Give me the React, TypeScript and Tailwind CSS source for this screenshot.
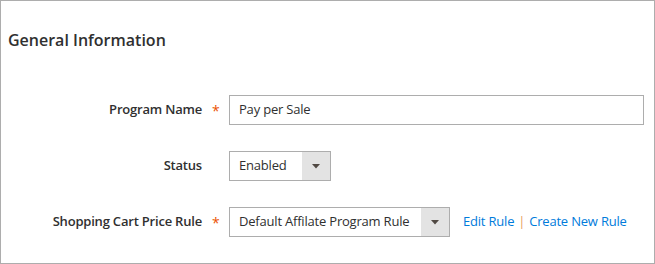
const font = { fontFamily: '"Open Sans", "Liberation Sans", sans-serif' };

function Arrow() {
  return (
    <svg width="8" height="5" viewBox="0 0 8 5" className="block">
      <path d="M0 0 H8 L4 4.5 Z" fill="#514943" />
    </svg>
  );
}

function Row({
  label,
  required,
  children,
}: {
  label: string;
  required?: boolean;
  children: React.ReactNode;
}) {
  return (
    <div className="flex h-[30px] items-center">
      <div className="w-[201px] text-right text-[13px] font-semibold tracking-[-0.2px] text-[#303030]">
        {label}
      </div>
      <div className="w-[27px] pl-[10px] text-[14px] text-[#eb5202]">
        {required ? "*" : ""}
      </div>
      {children}
    </div>
  );
}

function Select({ value, width }: { value: string; width: string }) {
  return (
    <div
      className={`flex h-[30px] items-stretch border border-[#adadad] bg-white ${width}`}
    >
      <div className="flex flex-1 items-center whitespace-nowrap pl-[9px] text-[13px] tracking-[-0.2px] text-[#303030]">
        {value}
      </div>
      <div className="flex w-[28px] items-center justify-center bg-[#e3e3e3]">
        <Arrow />
      </div>
    </div>
  );
}

export default function App() {
  return (
    <div
      style={font}
      className="h-[264px] w-[655px] border border-[#adadad] bg-white"
    >
      <h2 className="pl-[7px] pt-[28px] text-[16px] font-semibold leading-[22px] text-[#303030]">
        General Information
      </h2>
      <div className="mt-[44px] flex flex-col gap-[26px]">
        <Row label="Program Name" required>
          <div className="flex h-[30px] w-[415px] items-center border border-[#adadad] pl-[9px] text-[13px] tracking-[-0.2px] text-[#303030]">
            Pay per Sale
          </div>
        </Row>
        <Row label="Status">
          <Select value="Enabled" width="w-[102px]" />
        </Row>
        <Row label="Shopping Cart Price Rule" required>
          <Select value="Default Affilate Program Rule" width="w-[221px]" />
          <div className="ml-[13px] flex items-center whitespace-nowrap text-[13px] tracking-[-0.2px] text-[#007bdb]">
            <span>Edit Rule</span>
            <span className="mx-[4px] text-[#e8a05a]">|</span>
            <span>Create New Rule</span>
          </div>
        </Row>
      </div>
    </div>
  );
}
